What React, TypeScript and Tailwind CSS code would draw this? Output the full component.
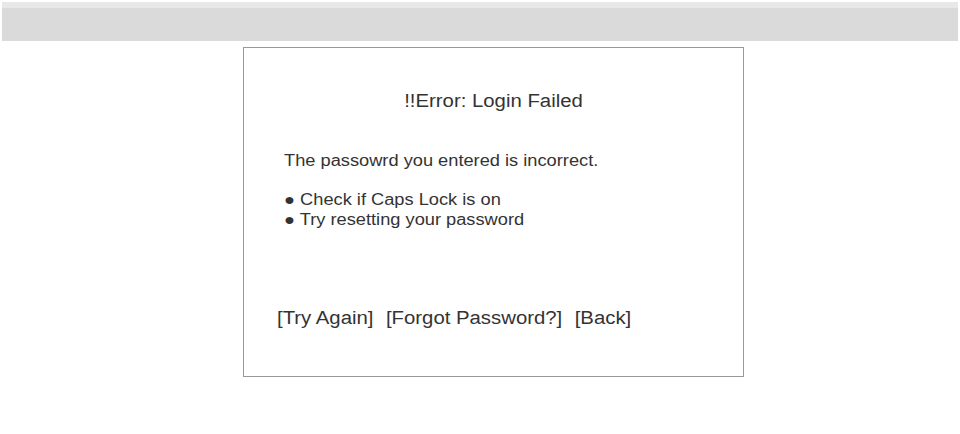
export default function App() {
  return (
    <div className="w-[960px] h-[434px] bg-white text-[#333] font-['Liberation_Sans',Arial,sans-serif]">
      <div className="pt-[2px] px-[2px]">
        <div className="h-[6px] bg-[#e8e8e8]" />
        <div className="h-[33px] bg-[#dadada]" />
      </div>
      <div className="flex justify-center pt-[6px] pl-[27px]">
        <div className="w-[501px] h-[330px] border border-[#999] bg-white flex flex-col">
          <h1 className="mt-[41px] text-center text-[18px] leading-[24px] scale-x-[1.13] origin-center">
            !!Error: Login Failed
          </h1>
          <p className="mt-[38px] ml-[40px] text-[16px] leading-[20px] scale-x-[1.14] origin-left">
            The passowrd you entered is incorrect.
          </p>
          <ul className="mt-[19px] ml-[40px] text-[16px] leading-[20px] scale-x-[1.14] origin-left">
            <li>● Check if Caps Lock is on</li>
            <li>● Try resetting your password</li>
          </ul>
          <div className="mt-[76px] ml-[33px] text-[18px] leading-[24px] flex gap-[11px] scale-x-[1.13] origin-left">
            <span>[Try Again]</span>
            <span>[Forgot Password?]</span>
            <span>[Back]</span>
          </div>
        </div>
      </div>
    </div>
  );
}
